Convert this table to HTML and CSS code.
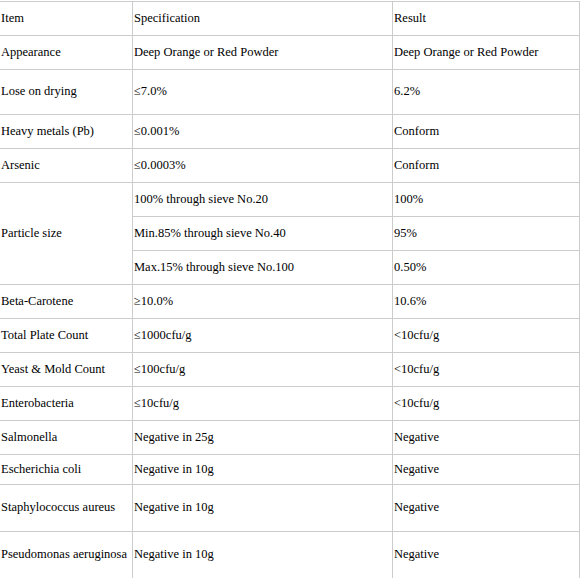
FILE: index.html
```html
<!DOCTYPE html>
<html>
<head>
<meta charset="utf-8">
<link rel="stylesheet" href="styles.css">
</head>
<body>
<table class="spec">
  <colgroup>
    <col class="c1"><col class="c2"><col class="c3">
  </colgroup>
  <tr><td>Item</td><td>Specification</td><td>Result</td></tr>
  <tr><td>Appearance</td><td>Deep Orange or Red Powder</td><td>Deep Orange or Red Powder</td></tr>
  <tr class="h45"><td>Lose on drying</td><td>≤7.0%</td><td>6.2%</td></tr>
  <tr><td>Heavy metals (Pb)</td><td>≤0.001%</td><td>Conform</td></tr>
  <tr><td>Arsenic</td><td>≤0.0003%</td><td>Conform</td></tr>
  <tr><td rowspan="3">Particle size</td><td>100% through sieve No.20</td><td>100%</td></tr>
  <tr><td>Min.85% through sieve No.40</td><td>95%</td></tr>
  <tr><td>Max.15% through sieve No.100</td><td>0.50%</td></tr>
  <tr><td>Beta-Carotene</td><td>≥10.0%</td><td>10.6%</td></tr>
  <tr><td>Total Plate Count</td><td>≤1000cfu/g</td><td>&lt;10cfu/g</td></tr>
  <tr><td>Yeast &amp; Mold Count</td><td>≤100cfu/g</td><td>&lt;10cfu/g</td></tr>
  <tr><td>Enterobacteria</td><td>≤10cfu/g</td><td>&lt;10cfu/g</td></tr>
  <tr><td>Salmonella</td><td>Negative in 25g</td><td>Negative</td></tr>
  <tr class="h30"><td>Escherichia coli</td><td>Negative in 10g</td><td>Negative</td></tr>
  <tr class="h47"><td>Staphylococcus aureus</td><td>Negative in 10g</td><td>Negative</td></tr>
  <tr class="h47"><td>Pseudomonas aeruginosa</td><td>Negative in 10g</td><td>Negative</td></tr>
</table>
</body>
</html>
```
FILE: styles.css
```css
html, body {
  margin: 0;
  padding: 0;
  background: #fff;
}
body {
  font-family: "Liberation Serif", "Times New Roman", serif;
  font-size: 12.5px;
  color: #000;
}
.spec {
  border-collapse: collapse;
  table-layout: fixed;
  width: 580px;
  margin: 1px 0 0 -1px;
}
.c1 { width: 133px; }
.c2 { width: 260px; }
.c3 { width: 187px; }
.spec td {
  border: 1px solid #cccccc;
  padding: 0 1px 1px;
  vertical-align: middle;
  line-height: 15px;
  white-space: nowrap;
}
.spec tr { height: 34px; }
.spec tr.h45 { height: 45px; }
.spec tr.h30 { height: 30px; }
.spec tr.h47 { height: 47px; }
```
